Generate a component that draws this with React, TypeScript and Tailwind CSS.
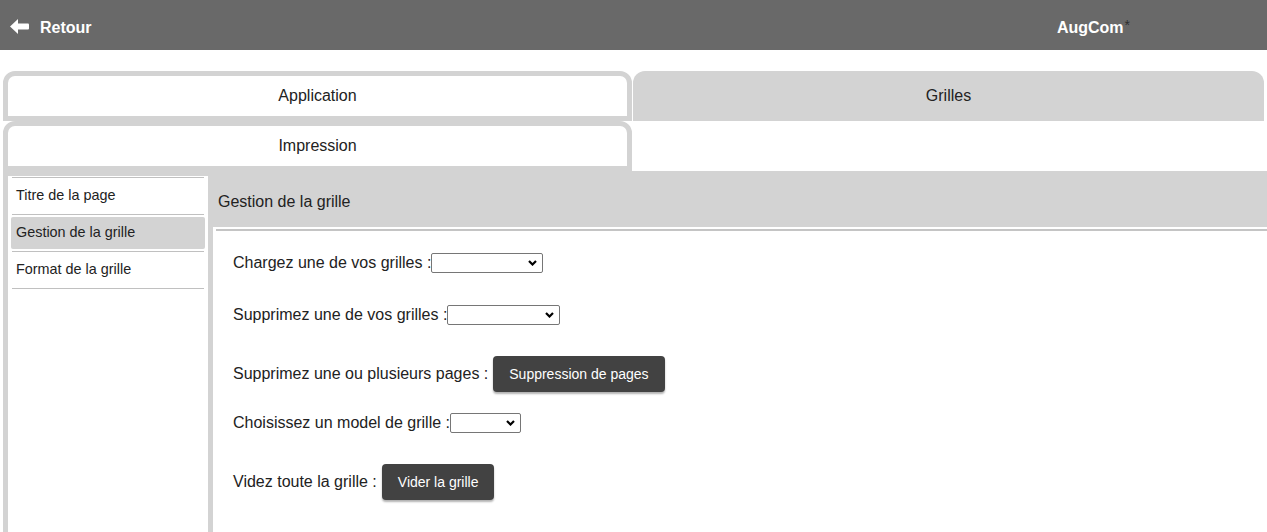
import React from "react";

function Chevron() {
  return (
    <svg width="9" height="6" viewBox="0 0 9 6" className="absolute right-[5px] top-[6px]">
      <polyline points="1,1 4.5,4.5 8,1" fill="none" stroke="#000" strokeWidth="2.2" />
    </svg>
  );
}

function Select({ w }: { w: string }) {
  return (
    <div className={`relative h-[20px] ${w} border border-[#767676] rounded-[2px] bg-white`}>
      <Chevron />
    </div>
  );
}

function Btn({ children }: { children: React.ReactNode }) {
  return (
    <button className="h-[36px] px-[16px] rounded-[4px] bg-[#424242] text-white text-[14px] shadow-[0_2px_2px_rgba(0,0,0,0.3)]">
      {children}
    </button>
  );
}

function BackArrow() {
  return (
    <svg width="19" height="15" viewBox="0 0 19 15" className="mt-[-3px]">
      <polygon points="0,7.5 8,0 8,15" fill="#fff" />
      <rect x="7" y="4.5" width="12" height="6" rx="1" fill="#fff" />
    </svg>
  );
}

export default function App() {
  const items = [
    { label: "Titre de la page", sel: false },
    { label: "Gestion de la grille", sel: true },
    { label: "Format de la grille", sel: false },
  ];
  return (
    <div className="font-['Liberation_Sans',Arial,sans-serif] text-[#222] min-h-[532px] bg-white">
      {/* Top bar */}
      <div className="h-[50px] bg-[#696969] flex items-center pl-[10px] pt-[5px] text-white">
        <BackArrow />
        <span className="ml-[11px] font-bold text-[16px]">Retour</span>
        <div className="ml-auto mr-[137px] flex items-start">
          <span className="font-bold text-[16px]">AugCom</span>
          <span className="text-[14px] leading-none text-[#2e2e2e] mt-[2px] ml-px">*</span>
        </div>
      </div>

      {/* Tabs */}
      <div className="mt-[21px] pl-[3px] flex flex-wrap gap-x-[1px] w-[1267px]">
        <div className="w-[629px] h-[50px] border-[5px] border-[#d3d3d3] rounded-t-[12px] bg-white flex items-center justify-center text-[16px]">
          Application
        </div>
        <div className="w-[631px] h-[50px] bg-[#d3d3d3] rounded-t-[12px] flex items-center justify-center text-[16px]">
          Grilles
        </div>
        <div className="w-[629px] h-[50px] border-[5px] border-[#d3d3d3] rounded-t-[12px] bg-white flex items-center justify-center text-[16px]">
          Impression
        </div>
      </div>

      {/* Content */}
      <div className="ml-[3px] bg-[#d3d3d3] flex gap-[5px] pl-[5px] pt-[5px] min-h-[361px]">
        {/* Sidebar */}
        <div className="w-[200px] bg-white px-[3px] pt-px">
          <div className="h-px bg-[#c0c0c0] mx-px" />
          {items.map((it) => (
            <div key={it.label}>
              <div className="h-[36px] py-[2px]">
                <div
                  className={`h-full flex items-center pl-[5px] text-[14.4px] rounded-[2px] ${
                    it.sel ? "bg-[#d3d3d3]" : ""
                  }`}
                >
                  {it.label}
                </div>
              </div>
              <div className="h-px bg-[#c0c0c0] mx-px" />
            </div>
          ))}
        </div>

        {/* Right panel */}
        <div className="flex-1 flex flex-col">
          <div className="h-[51px] flex items-center pl-[5px] text-[16px]">Gestion de la grille</div>
          <div className="flex-1 bg-white pt-[2px] pl-[3px]">
            <div className="h-[2px] bg-[#c4c4c4]" />
            <div className="pl-[17px] text-[16px]">
              <div className="mt-[14px] h-[36px] flex items-center">
                <span>Chargez une de vos grilles :</span>
                <Select w="w-[112px]" />
              </div>
              <div className="mt-[16px] h-[36px] flex items-center">
                <span>Supprimez une de vos grilles :</span>
                <Select w="w-[113px]" />
              </div>
              <div className="mt-[23px] h-[36px] flex items-center">
                <span className="mr-[5px]">Supprimez une ou plusieurs pages :</span>
                <Btn>Suppression de pages</Btn>
              </div>
              <div className="mt-[13px] h-[36px] flex items-center">
                <span>Choisissez un model de grille :</span>
                <Select w="w-[71px]" />
              </div>
              <div className="mt-[23px] h-[36px] flex items-center">
                <span className="mr-[5px]">Videz toute la grille :</span>
                <Btn>Vider la grille</Btn>
              </div>
            </div>
          </div>
        </div>
      </div>
    </div>
  );
}
